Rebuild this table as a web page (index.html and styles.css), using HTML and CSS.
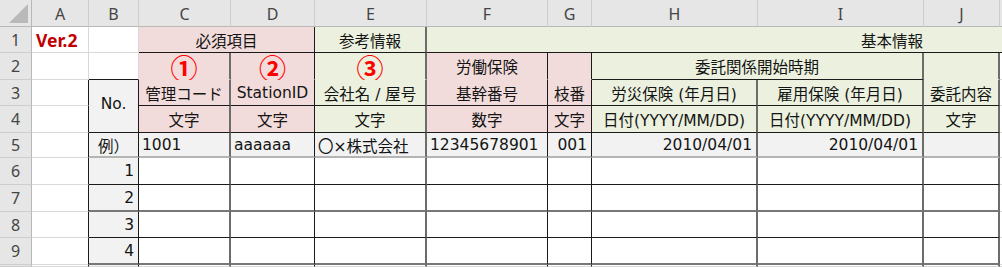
FILE: index.html
```html
<!DOCTYPE html>
<html lang="ja">
<head>
<meta charset="utf-8">
<title>Sheet</title>
<link rel="stylesheet" href="styles.css">
</head>
<body>
<div class="sheet">
  <!-- column headers -->
  <div class="c hd corner"><svg class="tri" width="19" height="19" viewBox="0 0 19 19"><polygon points="19,0 19,19 0,19" fill="#b9b9b9"/></svg></div>
  <div class="c hd">A</div>
  <div class="c hd">B</div>
  <div class="c hd">C</div>
  <div class="c hd">D</div>
  <div class="c hd">E</div>
  <div class="c hd">F</div>
  <div class="c hd">G</div>
  <div class="c hd">H</div>
  <div class="c hd">I</div>
  <div class="c hd">J</div>
  <div class="c hd kc"></div>

  <!-- row 1 -->
  <div class="c rn">1</div>
  <div class="c ver">Ver.2</div>
  <div class="c"></div>
  <div class="c pk ctr bb br s2">必須項目</div>
  <div class="c gn ctr bb bs">参考情報</div>
  <div class="c gn bb s6 kihon">基本情報</div>

  <!-- row 2 -->
  <div class="c rn">2</div>
  <div class="c"></div>
  <div class="c bb"></div>
  <div class="c pk ctr nb bs circ"><span class="num">①</span></div>
  <div class="c pk ctr nb br circ"><span class="num">②</span></div>
  <div class="c gn ctr nb bs circ"><span class="num">③</span></div>
  <div class="c pk ctr nb br">労働保険</div>
  <div class="c pk nb br"></div>
  <div class="c gn ctr bb bs s2">委託関係開始時期</div>
  <div class="c gn nb bs"></div>
  <div class="c kc"></div>

  <!-- row 3 -->
  <div class="c rn">3</div>
  <div class="c br"></div>
  <div class="c gy ctr bb br r2 no">No.</div>
  <div class="c pk ctr bb bs">管理コード</div>
  <div class="c pk ctr bb br">StationID</div>
  <div class="c gn ctr bb bs">会社名 / 屋号</div>
  <div class="c pk ctr bb br">基幹番号</div>
  <div class="c pk ctr bb br">枝番</div>
  <div class="c gn ctr bb bs">労災保険 (年月日)</div>
  <div class="c gn ctr bb bs">雇用保険 (年月日)</div>
  <div class="c gn ctr bb bs">委託内容</div>
  <div class="c kc"></div>

  <!-- row 4 -->
  <div class="c rn">4</div>
  <div class="c br"></div>
  <div class="c pk ctr bb bs">文字</div>
  <div class="c pk ctr bb br">文字</div>
  <div class="c gn ctr bb bs">文字</div>
  <div class="c pk ctr bb br">数字</div>
  <div class="c pk ctr bb br">文字</div>
  <div class="c gn ctr bb bs">日付(YYYY/MM/DD)</div>
  <div class="c gn ctr bb bs">日付(YYYY/MM/DD)</div>
  <div class="c gn ctr bb bs">文字</div>
  <div class="c kc"></div>

  <!-- row 5 -->
  <div class="c rn">5</div>
  <div class="c br"></div>
  <div class="c gy ctr bbl br">例）</div>
  <div class="c gy bbl bs">1001</div>
  <div class="c gy bbl br">aaaaaa</div>
  <div class="c gy bbl bs">〇×株式会社</div>
  <div class="c gy bbl br">12345678901</div>
  <div class="c gy bbl br rt">001</div>
  <div class="c gy bbl bs rt">2010/04/01</div>
  <div class="c gy bbl bs rt">2010/04/01</div>
  <div class="c gy bbl bs"></div>
  <div class="c kc"></div>

  <!-- row 6 -->
  <div class="c rn">6</div>
  <div class="c br"></div>
  <div class="c gy rt bb br">1</div>
  <div class="c bb bs"></div>
  <div class="c bb br"></div>
  <div class="c bb bs"></div>
  <div class="c bb br"></div>
  <div class="c bb br"></div>
  <div class="c bb bs"></div>
  <div class="c bb bs"></div>
  <div class="c bb bs"></div>
  <div class="c kc"></div>

  <!-- row 7 -->
  <div class="c rn">7</div>
  <div class="c br"></div>
  <div class="c gy rt bbs br">2</div>
  <div class="c bbs bs"></div>
  <div class="c bbs br"></div>
  <div class="c bbs bs"></div>
  <div class="c bbs br"></div>
  <div class="c bbs br"></div>
  <div class="c bbs bs"></div>
  <div class="c bbs bs"></div>
  <div class="c bbs bs"></div>
  <div class="c kc"></div>

  <!-- row 8 -->
  <div class="c rn">8</div>
  <div class="c br"></div>
  <div class="c gy rt bb br">3</div>
  <div class="c bb bs"></div>
  <div class="c bb br"></div>
  <div class="c bb bs"></div>
  <div class="c bb br"></div>
  <div class="c bb br"></div>
  <div class="c bb bs"></div>
  <div class="c bb bs"></div>
  <div class="c bb bs"></div>
  <div class="c kc"></div>

  <!-- row 9 -->
  <div class="c rn">9</div>
  <div class="c br"></div>
  <div class="c gy rt bbs br">4</div>
  <div class="c bbs bs"></div>
  <div class="c bbs br"></div>
  <div class="c bbs bs"></div>
  <div class="c bbs br"></div>
  <div class="c bbs br"></div>
  <div class="c bbs bs"></div>
  <div class="c bbs bs"></div>
  <div class="c bbs bs"></div>
  <div class="c kc"></div>

  <!-- row 10 (partial) -->
  <div class="c rn"></div>
  <div class="c br"></div>
  <div class="c gy br"></div>
  <div class="c bs"></div>
  <div class="c br"></div>
  <div class="c bs"></div>
  <div class="c br"></div>
  <div class="c br"></div>
  <div class="c bs"></div>
  <div class="c bs"></div>
  <div class="c bs"></div>
  <div class="c kc"></div>
</div>
</body>
</html>
```

FILE: styles.css
```css
html, body {
  margin: 0;
  padding: 0;
  background: #ffffff;
}

.sheet {
  display: grid;
  grid-template-columns: 32px 57px 50px 92px 84px 112px 121px 44px 166px 166px 76px 1fr;
  grid-template-rows: 27px 26px 27px 26px 27px 25px 27px 27px 26px 27px 1fr;
  width: 1002px;
  height: 267px;
  overflow: hidden;
  font-family: "DejaVu Sans", "Noto Sans CJK JP", sans-serif;
  font-size: 15.5px;
  color: #141414;
  background: #ffffff;
}

.c {
  box-sizing: border-box;
  border-right: 1px solid #d9d9d9;
  border-bottom: 1px solid #d9d9d9;
  display: flex;
  align-items: center;
  padding: 0 3px;
  white-space: nowrap;
  overflow: hidden;
  min-width: 0;
  min-height: 0;
}

.hd {
  background: #e6e6e6;
  color: #444444;
  justify-content: center;
  font-family: "Noto Sans", sans-serif;
  font-size: 16px;
  border-right-color: #cdcdcd;
  border-bottom-color: #b8b8b8;
  padding: 2px 0 0 0;
}

.corner {
  justify-content: flex-end;
  align-items: flex-end;
  padding: 0 3px 3px 0;
  border-right-color: #b8b8b8;
}

.tri { display: block; }

.rn {
  background: #e6e6e6;
  color: #444444;
  justify-content: center;
  font-family: "Noto Sans", sans-serif;
  font-size: 16px;
  border-right-color: #b8b8b8;
  border-bottom-color: #cdcdcd;
  padding: 0;
}

.kc { border-right-color: transparent; }

.ver {
  color: #c00000;
  font-family: "Noto Sans", sans-serif;
  font-weight: bold;
  font-size: 17.5px;
  padding-left: 4px;
}

.pk { background: #f2dcdb; }
.gn { background: #ebf1de; }
.gy { background: #f2f2f2; }

.ctr { justify-content: center; }
.rt { justify-content: flex-end; padding-right: 4px; }

.br { border-right: 1px solid #1a1a1a; }
.bs { border-right: 2px solid #6c6c6c; }
.bb { border-bottom: 1px solid #1a1a1a; }
.bbs { border-bottom: 2px solid #777777; }
.bbl { border-bottom: 2px solid #b4b4b4; }
.nb { border-bottom-color: transparent; }

.s2 { grid-column: span 2; }
.s6 { grid-column: span 6; }
.r2 { grid-row: span 2; }

.kihon {
  padding-left: 434px;
}

.no { padding-bottom: 4px; }

.circ { overflow: visible; }

.num {
  font-family: "Noto Sans CJK JP", sans-serif;
  font-weight: bold;
  font-size: 27px;
  line-height: 1;
  color: #ff0000;
  margin-top: 3px;
}
```
